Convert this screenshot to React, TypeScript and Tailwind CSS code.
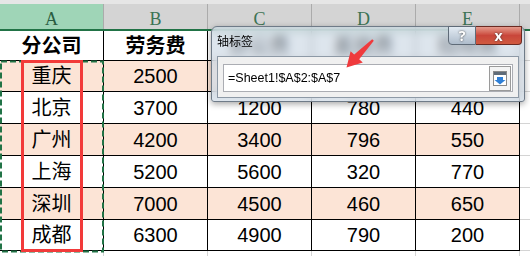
const cols = ['A', 'B', 'C', 'D', 'E'];

const heads = ['分公司', '劳务费', '办公费', '差旅费', '招待费'];

const rows = [
  { city: '重庆', v: ['2500', '3100', '560', '380'], h: 'h-[31px]' },
  { city: '北京', v: ['3700', '1200', '780', '440'], h: 'h-[32px]' },
  { city: '广州', v: ['4200', '3400', '796', '550'], h: 'h-[32px]' },
  { city: '上海', v: ['5200', '5600', '320', '770'], h: 'h-[32px]' },
  { city: '深圳', v: ['7000', '4500', '460', '650'], h: 'h-[32px]' },
  { city: '成都', v: ['6300', '4900', '790', '200'], h: 'h-[31px]' },
];

const cjk = { fontFamily: '"Liberation Sans", "Noto Sans CJK SC", sans-serif' };

function Sheet() {
  return (
    <div className="flex flex-col" style={cjk}>
      {/* column headers */}
      <div className="flex h-[31px] bg-[#e6e6e6] pt-[4px]">
        <div className="flex w-full border-b-2 border-[#217346]">
          {cols.map((c, i) => (
            <div
              key={c}
              className={`w-[104px] flex items-center justify-center pt-[6px] border-r border-[#ababab] text-[18px] ${
                i === 0 ? 'bg-[#9fd5b7] text-[#2a5d41]' : 'bg-[#d4d4d4] text-[#3c7355]'
              }`}
              style={{ fontFamily: '"Liberation Serif", serif' }}
            >
              {c}
            </div>
          ))}
          <div className="flex-1 bg-[#d4d4d4]" />
        </div>
      </div>

      {/* title row */}
      <div className="flex h-[30px] bg-white">
        {heads.map(h => (
          <div key={h} className="w-[104px] flex items-center justify-center border-r border-b border-black text-[20px] font-bold text-black">
            {h}
          </div>
        ))}
        <div className="flex-1 border-b border-[#d4d4d4]" />
      </div>

      {rows.map((r, i) => (
        <div key={r.city} className={`flex ${r.h} ${i % 2 === 0 ? 'bg-[#fce4d6]' : 'bg-white'}`}>
          <div className="w-[104px] flex items-center justify-center border-r border-b border-black text-[20px] text-black">
            {r.city}
          </div>
          {r.v.map((v, j) => (
            <div key={j} className="w-[104px] flex items-center justify-center border-r border-b border-black text-[20px] text-black">
              {v}
            </div>
          ))}
          <div className="flex-1 bg-white border-b border-[#d4d4d4]" />
        </div>
      ))}

      <div className="flex h-[8px] bg-white">
        {cols.map(c => (
          <div key={c} className="w-[104px] border-r border-[#d4d4d4]" />
        ))}
      </div>
    </div>
  );
}

function DownIcon() {
  return (
    <svg width="14" height="15" viewBox="0 0 14 15">
      <rect x="0.5" y="0.5" width="13" height="14" fill="#fff" stroke="#8a8a8a" />
      <rect x="1" y="1" width="12" height="3" fill="#5f6b78" />
      <path d="M4 6h6v3h2.5L7 13.5 1.5 9H4z" fill="#2f7fd6" />
    </svg>
  );
}

function Dialog() {
  return (
    <div className="absolute left-[211px] top-[26px] w-[314px] h-[76px] rounded-t-[6px] rounded-b-[3px] border border-[#6f7b88] bg-[#cfdae6]/70 backdrop-blur-[4px] shadow-[0_2px_6px_rgba(0,0,0,0.35)]">
      <div className="flex h-[28px] items-start">
        <span className="pl-[5px] pt-[8px] text-[12px] leading-[14px] text-black" style={cjk}>
          轴标签
        </span>
        <div className="ml-auto flex h-[19px] -mt-px mr-[2px]">
          <div className="w-[28px] flex items-center justify-center rounded-bl-[4px] border border-[#5f6b78] bg-gradient-to-b from-[#e3ebf3] to-[#aebccb] text-[14px] font-bold text-white [text-shadow:0_0_2px_#333]">
            ?
          </div>
          <div className="w-[46px] flex items-center justify-center rounded-br-[4px] border border-l-0 border-[#6b2a22] bg-gradient-to-b from-[#e49a8c] via-[#c9463a] to-[#d05a40] text-[14px] font-bold text-white [text-shadow:0_0_2px_#333]">
            x
          </div>
        </div>
      </div>
      <div className="mx-[5px] mt-px h-[42px] border border-[#8d99a6] bg-[#f0f0f0] px-[5px] pt-[7px]">
        <div className="flex h-[28px] items-center border border-[#abadb3] bg-white pl-[4px] pr-[1px]">
          <span className="text-[12.5px] text-black" style={{ fontFamily: '"Liberation Sans", sans-serif' }}>
            =Sheet1!$A$2:$A$7
          </span>
          <div className="ml-auto flex h-[25px] w-[22px] items-center justify-center border border-[#9a9a9a] bg-[#f4f4f4]">
            <DownIcon />
          </div>
        </div>
      </div>
    </div>
  );
}

export default function App() {
  return (
    <div className="relative w-[530px] h-[256px] overflow-hidden bg-white">
      <Sheet />

      {/* copy selection marquee */}
      <svg className="absolute left-0 top-[60px]" width="105" height="193">
        <rect x="1" y="1.5" width="102" height="190" fill="none" stroke="#217346" strokeWidth="2" strokeDasharray="6 3" />
      </svg>

      {/* red highlight box */}
      <div className="absolute left-[21px] top-[60px] w-[62px] h-[192px] border-[3px] border-[#f23a3a]" />

      <Dialog />

      {/* red arrow */}
      <svg className="absolute left-[340px] top-[34px]" width="40" height="38" viewBox="340 34 40 38">
        <polygon
          points="372.2,39.2 354.2,54.5 350.6,51.2 346.5,67.5 362.8,62.6 359.2,59.3 373.8,40.8"
          fill="#ef3a3d"
        />
      </svg>
    </div>
  );
}
